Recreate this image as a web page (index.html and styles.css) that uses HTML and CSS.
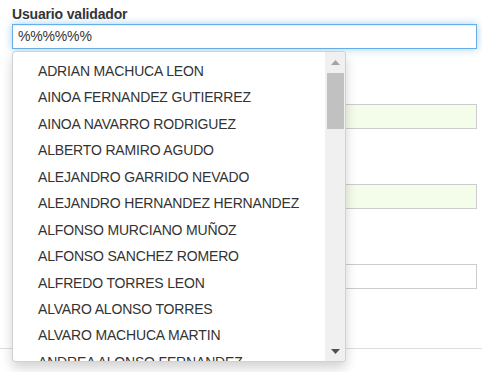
FILE: index.html
```html
<!DOCTYPE html>
<html lang="es">
<head>
<meta charset="utf-8">
<link rel="stylesheet" href="styles.css">
</head>
<body>
<div class="page">
  <div class="group">
    <label class="lbl">Usuario validador</label>
    <div class="field-wrap">
      <div class="input focus">%%%%%%</div>
      <div class="dropdown">
        <ul class="list">
          <li>ADRIAN MACHUCA LEON</li>
          <li>AINOA FERNANDEZ GUTIERREZ</li>
          <li>AINOA NAVARRO RODRIGUEZ</li>
          <li>ALBERTO RAMIRO AGUDO</li>
          <li>ALEJANDRO GARRIDO NEVADO</li>
          <li>ALEJANDRO HERNANDEZ HERNANDEZ</li>
          <li>ALFONSO MURCIANO MUÑOZ</li>
          <li>ALFONSO SANCHEZ ROMERO</li>
          <li>ALFREDO TORRES LEON</li>
          <li>ALVARO ALONSO TORRES</li>
          <li>ALVARO MACHUCA MARTIN</li>
          <li>ANDREA ALONSO FERNANDEZ</li>
        </ul>
        <div class="scrollbar">
          <div class="sb-btn"><svg width="9" height="5" viewBox="0 0 9 5"><polygon points="0,5 4.5,0 9,5" fill="#a3a3a3"/></svg></div>
          <div class="sb-thumb"></div>
          <div class="sb-space"></div>
          <div class="sb-btn"><svg width="9" height="5" viewBox="0 0 9 5"><polygon points="0,0 9,0 4.5,5" fill="#505050"/></svg></div>
        </div>
      </div>
    </div>
  </div>
  <div class="group">
    <label class="lbl warn">Fecha de validación</label>
    <div class="input green"></div>
  </div>
  <div class="group">
    <label class="lbl warn">Fecha de inicio</label>
    <div class="input green"></div>
  </div>
  <div class="group last">
    <label class="lbl warn">Observaciones</label>
    <div class="input"></div>
  </div>
  <div class="rule"></div>
</div>
</body>
</html>
```
FILE: styles.css
```css
html, body {
  margin: 0;
  padding: 0;
  height: 372px;
  background: #fff;
}
body {
  font-family: "Liberation Sans", Arial, sans-serif;
  font-size: 14px;
  letter-spacing: -0.17px;
  color: #333;
}
.page {
  padding: 4px 5px 0 12px;
  height: 372px;
  box-sizing: border-box;
  display: flex;
  flex-direction: column;
}
.group {
  display: flex;
  flex-direction: column;
  margin-bottom: 35px;
}
.group.last {
  margin-bottom: 59px;
}
.lbl {
  font-weight: bold;
  line-height: 20px;
  height: 20px;
  color: #333;
}
.lbl.warn {
  color: #c9821a;
}
.field-wrap {
  position: relative;
}
.input {
  box-sizing: border-box;
  height: 25px;
  border: 1px solid #ccc;
  background: #fff;
  padding: 0 5px;
  line-height: 23px;
  font-size: 14px;
  color: #333;
}
.input.focus {
  border-color: #66afe9;
  box-shadow: inset 0 1px 1px rgba(0,0,0,.075), 0 0 8px rgba(102,175,233,.6);
}
.input.green {
  background: #f3fde9;
}
.dropdown {
  position: absolute;
  top: 27px;
  left: 0;
  width: 334px;
  height: 311px;
  box-sizing: border-box;
  background: #fff;
  border: 1px solid rgba(0,0,0,.18);
  border-radius: 4px;
  box-shadow: 0 6px 12px rgba(0,0,0,.175);
  display: flex;
  overflow: hidden;
  z-index: 10;
}
.list {
  flex: 1;
  list-style: none;
  margin: 0;
  padding: 6px 0 0 0;
  overflow: hidden;
}
.list li {
  padding-left: 25px;
  line-height: 26.45px;
  height: 26.45px;
  white-space: nowrap;
  color: #333;
}
.scrollbar {
  width: 20px;
  background: #f0f0f0;
  display: flex;
  flex-direction: column;
}
.sb-btn {
  height: 20px;
  display: flex;
  align-items: center;
  justify-content: center;
  padding-left: 1px;
}
.sb-btn svg {
  display: block;
}
.sb-thumb {
  margin: 1px 1px 0 2px;
  height: 56px;
  background: #c1c1c1;
}
.sb-space {
  flex: 1;
}
.rule {
  flex: none;
  height: 1px;
  background: #ddd;
  margin: 0 -5px 0 -12px;
}
```
